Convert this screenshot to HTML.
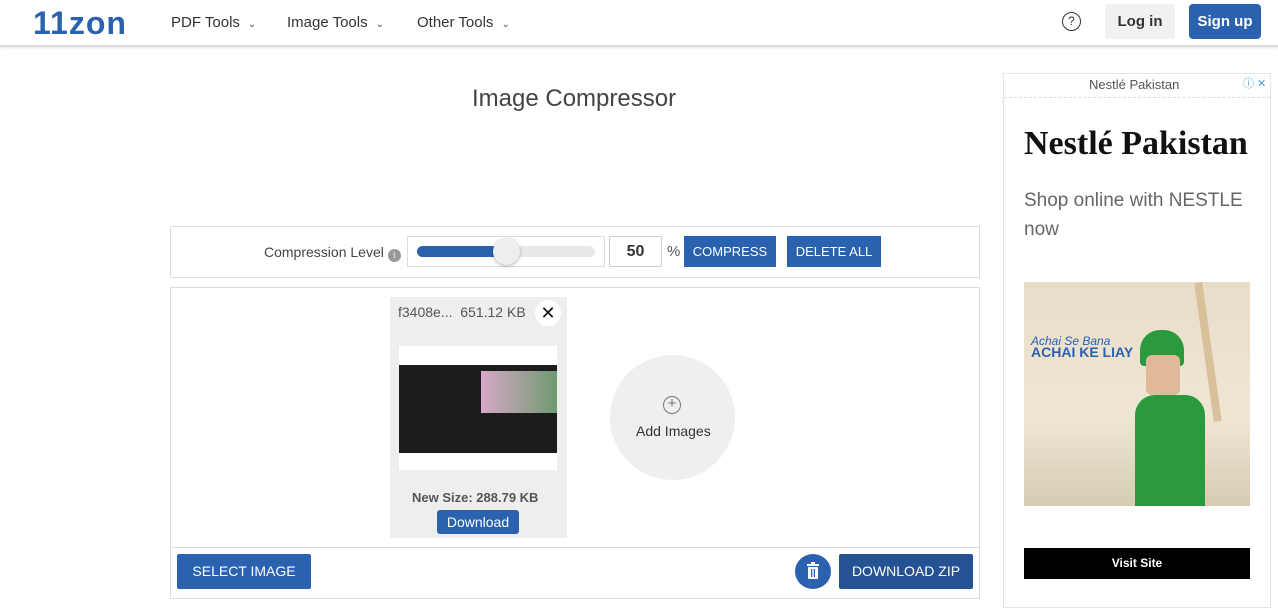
<!DOCTYPE html>
<html><head><meta charset="utf-8"><style>
*{box-sizing:border-box;margin:0;padding:0}
body{width:1278px;height:612px;overflow:hidden;background:#fff;font-family:"Liberation Sans",sans-serif;position:relative;color:#333}
.abs{position:absolute}
.hdr{left:0;top:0;width:1278px;height:47px;background:#fff;border-bottom:2px solid #ddd;box-shadow:0 1px 3px rgba(0,0,0,.1)}
.logo{left:33px;top:5px;font-size:32px;font-weight:bold;color:#2a62b0;letter-spacing:1px}
.nav{top:14px;font-size:15px;color:#333}
.nav span{font-size:10px;margin-left:8px;color:#555}
.btn{background:#2a62b0;color:#fff;text-align:center}
</style></head><body>
<div class="abs hdr"></div>
<div class="abs logo">11zon</div>
<div class="abs nav" style="left:171px">PDF Tools<span>⌄</span></div>
<div class="abs nav" style="left:287px">Image Tools<span>⌄</span></div>
<div class="abs nav" style="left:417px">Other Tools<span>⌄</span></div>
<div class="abs" style="left:1062px;top:12px;width:19px;height:19px;border:1.5px solid #333;border-radius:50%;font-size:12px;text-align:center;line-height:16px">?</div>
<div class="abs" style="left:1105px;top:4px;width:70px;height:35px;background:#f1f1f1;border-radius:4px;font-size:15px;font-weight:bold;text-align:center;line-height:35px">Log in</div>
<div class="abs btn" style="left:1189px;top:4px;width:72px;height:35px;border-radius:4px;font-size:15px;font-weight:bold;line-height:35px">Sign up</div>

<div class="abs" style="left:472px;top:85px;font-size:24px;color:#444">Image Compressor</div>

<div class="abs" style="left:170px;top:226px;width:810px;height:52px;border:1px solid #ddd"></div>
<div class="abs" style="left:264px;top:244px;font-size:14px;color:#444">Compression Level <span style="display:inline-block;width:13px;height:13px;border-radius:50%;background:#999;color:#fff;font-size:9px;text-align:center;line-height:13px;vertical-align:-1px">i</span></div>
<div class="abs" style="left:407px;top:236px;width:198px;height:31px;border:1px solid #ddd"></div>
<div class="abs" style="left:417px;top:246px;width:178px;height:11px;border-radius:6px;background:#e8e8e8"></div>
<div class="abs" style="left:417px;top:246px;width:90px;height:11px;border-radius:6px;background:#2a62b0"></div>
<div class="abs" style="left:493px;top:238px;width:27px;height:27px;border-radius:50%;background:#eee;box-shadow:0 1px 3px rgba(0,0,0,.3)"></div>
<div class="abs" style="left:609px;top:236px;width:53px;height:31px;border:1px solid #ccc;border-radius:2px;font-size:16px;font-weight:bold;text-align:center;line-height:29px">50</div>
<div class="abs" style="left:667px;top:243px;font-size:15px;color:#555">%</div>
<div class="abs btn" style="left:684px;top:236px;width:92px;height:31px;font-size:13px;line-height:31px">COMPRESS</div>
<div class="abs btn" style="left:787px;top:236px;width:94px;height:31px;font-size:13px;line-height:31px">DELETE ALL</div>

<div class="abs" style="left:170px;top:287px;width:810px;height:312px;border:1px solid #ddd"></div>
<div class="abs" style="left:171px;top:547px;width:808px;height:1px;background:#ddd"></div>
<div class="abs" style="left:390px;top:297px;width:177px;height:241px;background:#eee"></div>
<div class="abs" style="left:398px;top:304px;font-size:14px;color:#555">f3408e...&nbsp;&nbsp;651.12 KB</div>
<div class="abs" style="left:535px;top:300px;width:26px;height:26px;border-radius:50%;background:#fff;font-size:18px;text-align:center;line-height:26px;color:#111">✕</div>
<div class="abs" style="left:399px;top:346px;width:158px;height:124px;background:#fff"></div>
<div class="abs" style="left:399px;top:365px;width:158px;height:88px;background:#1c1c1c"></div>
<div class="abs" style="left:481px;top:371px;width:76px;height:42px;background:linear-gradient(90deg,#d8a8c8,#6e9a70)"></div>
<div class="abs" style="left:412px;top:490px;font-size:13px;font-weight:bold;color:#555">New Size: 288.79 KB</div>
<div class="abs btn" style="left:437px;top:510px;width:82px;height:24px;border-radius:3px;font-size:14px;line-height:24px">Download</div>
<div class="abs" style="left:610px;top:355px;width:125px;height:125px;border-radius:50%;background:#efefef"></div>
<div class="abs" style="left:663px;top:396px;width:18px;height:18px;border:1.5px solid #777;border-radius:50%;text-align:center;line-height:14px;font-size:15px;color:#777">+</div>
<div class="abs" style="left:636px;top:423px;font-size:14px;color:#333">Add Images</div>

<div class="abs btn" style="left:177px;top:554px;width:134px;height:35px;font-size:14px;line-height:35px;border-radius:2px">SELECT IMAGE</div>
<div class="abs btn" style="left:795px;top:554px;width:36px;height:35px;border-radius:50%"><svg width="36" height="35" viewBox="0 0 36 35"><rect x="12" y="10" width="12" height="2" fill="#fff"/><rect x="16" y="8" width="4" height="2" fill="#fff"/><rect x="13" y="13" width="10" height="12" rx="1" fill="#fff"/><rect x="16" y="15" width="1.3" height="8" fill="#2a62b0"/><rect x="18.7" y="15" width="1.3" height="8" fill="#2a62b0"/></svg></div>
<div class="abs btn" style="left:839px;top:554px;width:134px;height:35px;font-size:14px;line-height:35px;background:#255293;border-radius:2px">DOWNLOAD ZIP</div>

<div class="abs" style="left:1003px;top:73px;width:268px;height:535px;border:1px solid #e5e5e5"></div>
<div class="abs" style="left:1004px;top:97px;width:266px;border-top:1px dashed #ddd"></div>
<div class="abs" style="left:1089px;top:77px;font-size:13px;color:#555">Nestlé Pakistan</div>
<div class="abs" style="left:1243px;top:75px;font-size:11px;color:#4aa3d8">ⓘ ✕</div>
<div class="abs" style="left:1024px;top:125px;font-family:'Liberation Serif',serif;font-size:34px;font-weight:bold;color:#111">Nestlé Pakistan</div>
<div class="abs" style="left:1024px;top:186px;font-size:19px;color:#666;line-height:29px;width:230px">Shop online with NESTLE now</div>
<div class="abs" style="left:1024px;top:282px;width:226px;height:224px;background:linear-gradient(180deg,#e8ddc8,#efe6d4 60%,#d6cbb3)"></div>
<div class="abs" style="left:1031px;top:334px;font-size:12px;font-style:italic;color:#2a62b0">Achai Se Bana</div>
<div class="abs" style="left:1031px;top:344px;font-size:14px;font-weight:bold;color:#2a62b0">ACHAI KE LIAY</div>
<div class="abs" style="left:1135px;top:395px;width:70px;height:111px;background:#2b9a3e;border-radius:20px 20px 0 0"></div>
<div class="abs" style="left:1140px;top:330px;width:44px;height:36px;background:#2b9a3e;border-radius:20px 20px 4px 4px"></div>
<div class="abs" style="left:1146px;top:355px;width:34px;height:40px;background:#e0b89a;border-radius:6px"></div>
<div class="abs" style="left:1204px;top:282px;width:8px;height:140px;background:#d8c09a;transform:rotate(-8deg)"></div>
<div class="abs" style="left:1024px;top:548px;width:226px;height:31px;background:#000;color:#fff;font-size:12px;font-weight:bold;text-align:center;line-height:31px">Visit Site</div>
</body></html>
